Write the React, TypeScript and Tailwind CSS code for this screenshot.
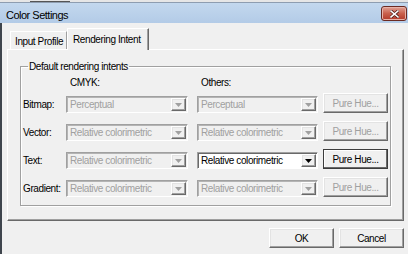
import type { ReactNode } from 'react'

const raised =
  'border border-t-white border-l-white border-r-[#696969] border-b-[#696969] shadow-[inset_-1px_-1px_0_#a0a0a0,inset_1px_1px_0_#e3e3e3]'

function Arrow({ enabled }: { enabled: boolean }) {
  return (
    <div className={`mr-[1px] flex h-[13px] w-[15px] items-center justify-center bg-[#f0f0f0] ${raised}`}>
      <svg width="7" height="4" viewBox="0 0 7 4">
        <path d="M0 0H7L3.5 4Z" fill={enabled ? '#000' : '#a0a0a0'} />
      </svg>
    </div>
  )
}

function Combo({ value, enabled = false, w }: { value: string; enabled?: boolean; w: string }) {
  return (
    <div
      className={`flex h-[17px] ${w} items-center border border-t-[#a0a0a0] border-l-[#a0a0a0] border-r-white border-b-white ${
        enabled
          ? 'bg-white text-black shadow-[inset_1px_1px_0_#696969]'
          : 'bg-[#f0f0f0] text-[#a0a0a0] shadow-[inset_1px_1px_0_#b4b4b4]'
      }`}
    >
      <span className="flex-1 truncate whitespace-nowrap pl-[3px] leading-[13px]">{value}</span>
      <Arrow enabled={enabled} />
    </div>
  )
}

function PureHue({ enabled = false }: { enabled?: boolean }) {
  return (
    <div
      className={`flex h-[20px] w-[65px] items-center justify-center whitespace-nowrap bg-[#f0f0f0] ${
        enabled
          ? 'border border-[#3c3c3c] text-black shadow-[inset_-1px_-1px_0_#696969,inset_1px_1px_0_#fff]'
          : `${raised} text-[#a0a0a0]`
      }`}
    >
      Pure Hue...
    </div>
  )
}

function Row({ label, cmyk, other, enabled = false }: { label: string; cmyk: string; other: string; enabled?: boolean }) {
  return (
    <div className="flex h-[20px] items-end">
      <span className="mb-[2px] w-[43px] whitespace-nowrap">{label}</span>
      <Combo value={cmyk} w="w-[122px]" />
      <div className="ml-[9px]">
        <Combo value={other} enabled={enabled} w="w-[121px]" />
      </div>
      <div className="ml-[5px]">
        <PureHue enabled={enabled} />
      </div>
    </div>
  )
}

function Tab({ children, active = false }: { children: ReactNode; active?: boolean }) {
  return active ? (
    <div className="relative z-10 -mb-px flex h-[22px] w-[82px] items-start whitespace-nowrap border border-b-0 border-t-white border-l-white border-r-[#696969] bg-[#f0f0f0] pl-[5px] pt-[4px] shadow-[inset_-1px_0_0_#a0a0a0]">
      {children}
    </div>
  ) : (
    <div className="flex h-[18px] w-[57px] items-start whitespace-nowrap border border-b-0 border-t-white border-l-white border-r-[#a0a0a0] bg-[#f0f0f0] pl-[4px] pt-[3px]">
      {children}
    </div>
  )
}

export default function App() {
  return (
    <div className="flex h-[254px] w-[408px] flex-col overflow-hidden bg-[#f0f0f0] text-[10px] leading-[13px] tracking-[-0.4px] text-black [font-family:'Liberation_Sans',Arial,sans-serif]">
      {/* edge of the window behind */}
      <div className="flex h-[2px] bg-[#e6e6e6]">
        <div className="ml-[30px] w-[40px] border-b border-[#555]" />
      </div>

      {/* title bar */}
      <div className="flex h-[21px] items-start justify-between border-t border-[#8e9db0] bg-gradient-to-b from-[#c3d8ee] to-[#b3cbe7]">
        <span className="whitespace-nowrap pl-[6px] pt-[5px] text-[11px] leading-[14px] tracking-[-0.5px]">Color Settings</span>
        <div className="mr-[1px] mt-[3px] flex h-[15px] w-[26px] items-center justify-center rounded-[3px] border border-[#6b2a22] bg-gradient-to-b from-[#e0a195] via-[#c9604c] to-[#b2392a] shadow-[inset_0_0_0_1px_#e8b3a8]">
          <svg width="9" height="8" viewBox="0 0 9 8">
            <path d="M1 1L8 7M8 1L1 7" stroke="#4a1a14" strokeWidth="3" strokeLinecap="square" />
            <path d="M1 1L8 7M8 1L1 7" stroke="#fff" strokeWidth="1.6" strokeLinecap="square" />
          </svg>
        </div>
      </div>

      {/* client area */}
      <div className="flex flex-1 flex-col border-l-2 border-[#3f454d] pl-[5px] pr-[4px]">
        <div className="mt-[5px] flex items-end pl-[3px]">
          <Tab>Input Profile</Tab>
          <Tab active>Rendering Intent</Tab>
        </div>

        <div className="flex h-[172px] w-[397px] flex-col border border-t-white border-l-white border-r-[#696969] border-b-[#696969] px-[12px] shadow-[inset_-1px_-1px_0_#a0a0a0]">
          <fieldset className="mt-[10px] border border-[#a0a0a0] pb-[8px] pl-[2px] shadow-[inset_1px_1px_0_#fff,1px_1px_0_#fff]">
            <legend className="ml-[5px] px-[1px] leading-[13px]">Default rendering intents</legend>
            <div className="mt-[3px] flex">
              <span className="ml-[47px] w-[131px]">CMYK:</span>
              <span>Others:</span>
            </div>
            <div className="mt-[4px] flex flex-col gap-[8px]">
              <Row label="Bitmap:" cmyk="Perceptual" other="Perceptual" />
              <Row label="Vector:" cmyk="Relative colorimetric" other="Relative colorimetric" />
              <Row label="Text:" cmyk="Relative colorimetric" other="Relative colorimetric" enabled />
              <Row label="Gradient:" cmyk="Relative colorimetric" other="Relative colorimetric" />
            </div>
          </fieldset>
        </div>

        <div className="mt-[7px] flex justify-end gap-[5px]">
          <div className={`flex h-[20px] w-[65px] items-center justify-center bg-[#f0f0f0] ${raised}`}>OK</div>
          <div className={`flex h-[20px] w-[65px] items-center justify-center bg-[#f0f0f0] ${raised}`}>Cancel</div>
        </div>
      </div>
    </div>
  )
}
